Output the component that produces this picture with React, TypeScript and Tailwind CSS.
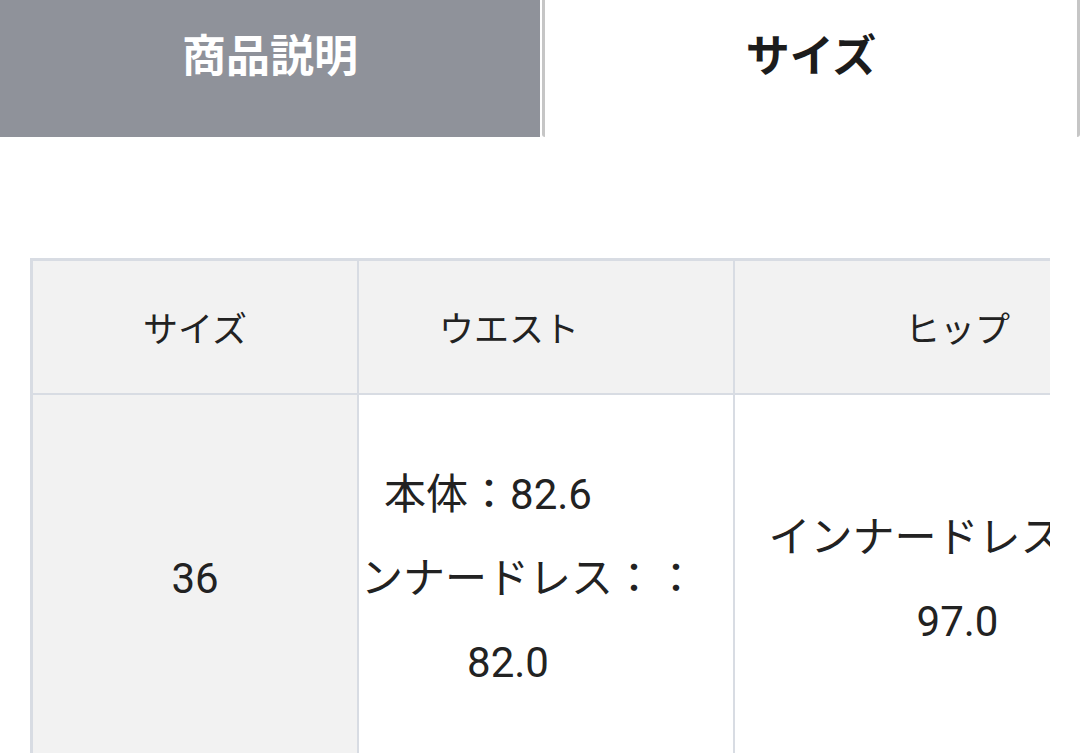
export default function App() {
  const font = 'font-["Roboto","Noto_Sans_CJK_JP",sans-serif]';

  return (
    <div className={`w-[1080px] h-[753px] overflow-hidden bg-white ${font}`}>
      {/* tabs */}
      <div className="flex h-[137px]">
        <div className="w-[540px] h-full bg-[#8f929a] flex items-center justify-center pb-[24px]">
          <span className="text-[44px] leading-none font-bold text-white">商品説明</span>
        </div>
        <div className="ml-[2px] flex-1 h-full bg-white border-l-[3px] border-r-[3px] border-[#c6c6c6] rounded-b-[3px] flex items-center justify-center pb-[24px]">
          <span className="text-[44px] leading-none font-bold text-[#1c1c1c]">サイズ</span>
        </div>
      </div>

      {/* size table */}
      <div className="mt-[121px] ml-[30px] w-[1020px] overflow-hidden">
        <div className="w-[1150px] border-l-[3px] border-t-[3px] border-[#d8dce3] text-[#222222]">
          <div className="flex h-[134px] bg-[#f2f2f2] border-b-2 border-[#d8dce3] text-[35px] leading-none">
            <div className="w-[326px] border-r-2 border-[#d8dce3] flex items-center justify-center pt-[6px]">
              サイズ
            </div>
            <div className="w-[376px] border-r-2 border-[#d8dce3] flex items-center justify-center pt-[6px] pr-[74px]">
              ウエスト
            </div>
            <div className="flex-1 flex items-center justify-center pt-[6px]">ヒップ</div>
          </div>

          <div className="flex text-[42px] leading-[84px]">
            <div className="w-[326px] bg-[#f2f2f2] border-r-2 border-[#d8dce3] flex items-center justify-center">
              36
            </div>
            <div className="w-[376px] border-r-2 border-[#d8dce3] overflow-hidden py-[58px] pr-[76px] flex flex-col items-center whitespace-nowrap">
              <span className="mr-[40px]">本体：82.6</span>
              <span>インナードレス：：</span>
              <span>82.0</span>
            </div>
            <div className="flex-1 flex flex-col items-center justify-center whitespace-nowrap pt-[2px]">
              <span>インナードレス：：</span>
              <span>97.0</span>
            </div>
          </div>
        </div>
      </div>
    </div>
  );
}
